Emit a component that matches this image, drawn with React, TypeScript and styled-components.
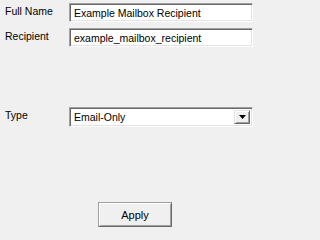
import React from 'react';
import styled, { createGlobalStyle } from 'styled-components';

const GlobalStyle = createGlobalStyle`
  html, body {
    margin: 0;
    padding: 0;
    background: #f0f0f0;
  }
  body {
    font-family: "Liberation Sans", Arial, sans-serif;
    font-size: 10.5px;
    color: #000;
  }
`;

const Form = styled.div`
  width: 256px;
  height: 233px;
  box-sizing: border-box;
  padding: 3px 3px 0 5px;
  display: flex;
  flex-direction: column;
`;

const Row = styled.div<{ $top?: number }>`
  display: flex;
  align-items: flex-start;
  margin-top: ${(p) => p.$top ?? 0}px;
`;

const Label = styled.div`
  width: 64px;
  flex-shrink: 0;
  padding-top: 2px;
  line-height: 13px;
  white-space: nowrap;
`;

const Sunken = styled.div`
  flex: 1;
  box-sizing: border-box;
  border-style: solid;
  border-width: 1px;
  border-color: #a0a0a0 #ffffff #ffffff #a0a0a0;
  box-shadow: inset 1px 1px #696969, inset -1px -1px #e3e3e3;
  background: #fff;
`;

const TextField = styled(Sunken)`
  height: 19px;
  padding: 3px 0 0 4px;
  line-height: 13px;
  white-space: nowrap;
  overflow: hidden;
`;

const SelectBox = styled(Sunken)`
  height: 20px;
  display: flex;
  align-items: stretch;
  padding: 2px;
`;

const SelectText = styled.div`
  flex: 1;
  padding: 1px 0 0 2px;
  line-height: 13px;
`;

const DropButton = styled.div`
  width: 16px;
  box-sizing: border-box;
  background: #f0f0f0;
  border-style: solid;
  border-width: 1px;
  border-color: #e3e3e3 #696969 #696969 #e3e3e3;
  box-shadow: inset 1px 1px #ffffff, inset -1px -1px #a0a0a0;
  display: flex;
  align-items: center;
  justify-content: center;
`;

const Button = styled.div`
  width: 74px;
  height: 25px;
  box-sizing: border-box;
  margin: 75px 0 0 93px;
  background: #f0f0f0;
  border-style: solid;
  border-width: 1px;
  border-color: #a0a0a0 #696969 #696969 #a0a0a0;
  box-shadow: inset 1px 1px #ffffff, inset -1px -1px #a0a0a0;
  display: flex;
  align-items: center;
  justify-content: center;
  font-size: 11px;
`;

export default function App() {
  return (
    <>
      <GlobalStyle />
      <Form>
        <Row>
          <Label>Full Name</Label>
          <TextField>Example Mailbox Recipient</TextField>
        </Row>
        <Row $top={6}>
          <Label>Recipient</Label>
          <TextField>example_mailbox_recipient</TextField>
        </Row>
        <Row $top={60}>
          <Label>Type</Label>
          <SelectBox>
            <SelectText>Email-Only</SelectText>
            <DropButton>
              <svg width="7" height="4" viewBox="0 0 7 4">
                <path d="M0 0h7L3.5 4z" fill="#000" />
              </svg>
            </DropButton>
          </SelectBox>
        </Row>
        <Button>Apply</Button>
      </Form>
    </>
  );
}
